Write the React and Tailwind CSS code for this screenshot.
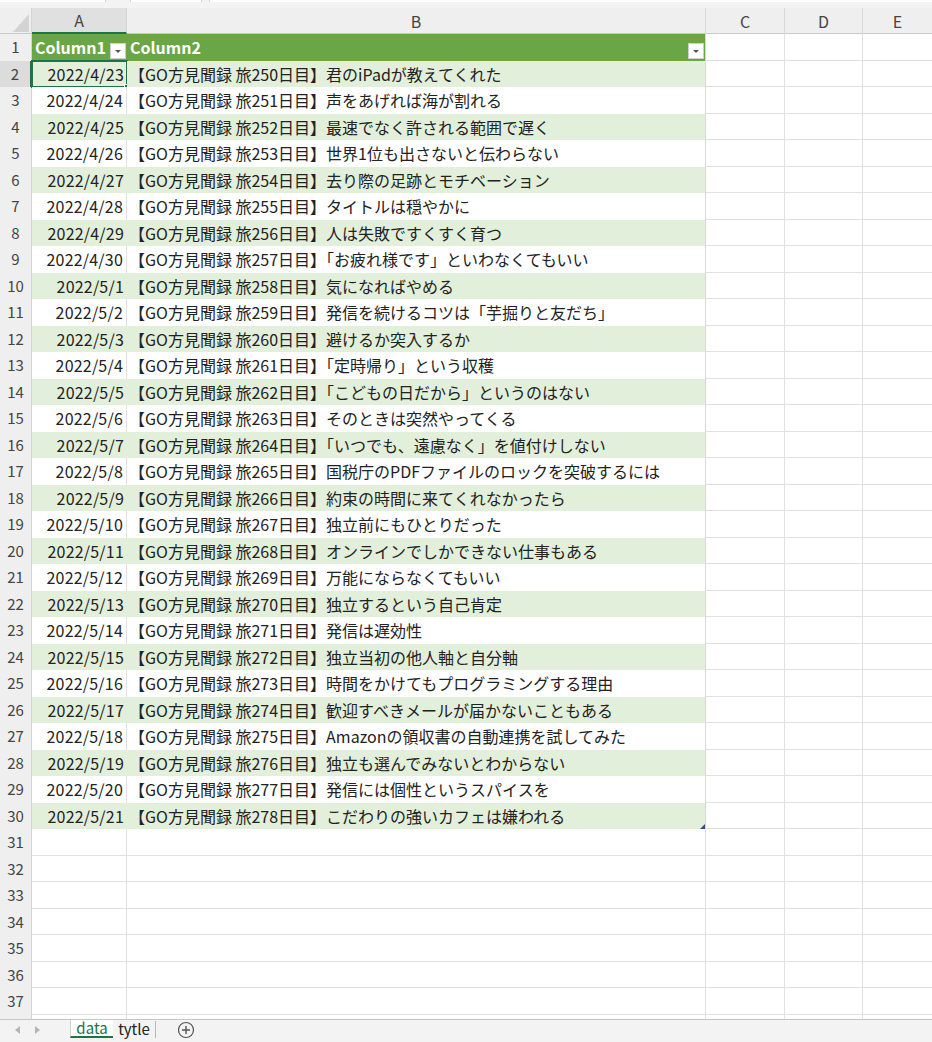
import React from "react";

const rows = [
    ["2022/4/23", "【GO方見聞録 旅250日目】君のiPadが教えてくれた"],
    ["2022/4/24", "【GO方見聞録 旅251日目】声をあげれば海が割れる"],
    ["2022/4/25", "【GO方見聞録 旅252日目】最速でなく許される範囲で遅く"],
    ["2022/4/26", "【GO方見聞録 旅253日目】世界1位も出さないと伝わらない"],
    ["2022/4/27", "【GO方見聞録 旅254日目】去り際の足跡とモチベーション"],
    ["2022/4/28", "【GO方見聞録 旅255日目】タイトルは穏やかに"],
    ["2022/4/29", "【GO方見聞録 旅256日目】人は失敗ですくすく育つ"],
    ["2022/4/30", "【GO方見聞録 旅257日目】「お疲れ様です」といわなくてもいい"],
    ["2022/5/1", "【GO方見聞録 旅258日目】気になればやめる"],
    ["2022/5/2", "【GO方見聞録 旅259日目】発信を続けるコツは「芋掘りと友だち」"],
    ["2022/5/3", "【GO方見聞録 旅260日目】避けるか突入するか"],
    ["2022/5/4", "【GO方見聞録 旅261日目】「定時帰り」という収穫"],
    ["2022/5/5", "【GO方見聞録 旅262日目】「こどもの日だから」というのはない"],
    ["2022/5/6", "【GO方見聞録 旅263日目】そのときは突然やってくる"],
    ["2022/5/7", "【GO方見聞録 旅264日目】「いつでも、遠慮なく」を値付けしない"],
    ["2022/5/8", "【GO方見聞録 旅265日目】国税庁のPDFファイルのロックを突破するには"],
    ["2022/5/9", "【GO方見聞録 旅266日目】約束の時間に来てくれなかったら"],
    ["2022/5/10", "【GO方見聞録 旅267日目】独立前にもひとりだった"],
    ["2022/5/11", "【GO方見聞録 旅268日目】オンラインでしかできない仕事もある"],
    ["2022/5/12", "【GO方見聞録 旅269日目】万能にならなくてもいい"],
    ["2022/5/13", "【GO方見聞録 旅270日目】独立するという自己肯定"],
    ["2022/5/14", "【GO方見聞録 旅271日目】発信は遅効性"],
    ["2022/5/15", "【GO方見聞録 旅272日目】独立当初の他人軸と自分軸"],
    ["2022/5/16", "【GO方見聞録 旅273日目】時間をかけてもプログラミングする理由"],
    ["2022/5/17", "【GO方見聞録 旅274日目】歓迎すべきメールが届かないこともある"],
    ["2022/5/18", "【GO方見聞録 旅275日目】Amazonの領収書の自動連携を試してみた"],
    ["2022/5/19", "【GO方見聞録 旅276日目】独立も選んでみないとわからない"],
    ["2022/5/20", "【GO方見聞録 旅277日目】発信には個性というスパイスを"],
    ["2022/5/21", "【GO方見聞録 旅278日目】こだわりの強いカフェは嫌われる"],
];

const FilterButton = () => (
    <span className="absolute right-[1px] top-[9px] w-[16px] h-[16px] bg-white border border-[#d0d0d0] flex items-center justify-center">
        <svg width="8" height="6" viewBox="0 0 8 6">
            <path d="M1 2 L7 2 L4 5 Z" fill="#555" />
        </svg>
    </span>
);

const RowHead = ({ n, active }) => (
    <div
        className={`flex items-center justify-center text-[15px] text-[#444] border-r ${
            active ? "bg-[#dcdcdc] border-r-2 border-[#217346]" : "bg-[#efefef] border-[#d4d4d4]"
        }`}
    >
        {n}
    </div>
);

const Blank = ({ last }) => (
    <div className={`border-b border-[#e1e1e1] ${last ? "" : "border-r"}`}></div>
);

export default function App() {
    const font = { fontFamily: '"Noto Sans CJK JP", "Noto Sans", sans-serif' };
    const grid = "grid grid-cols-[32px_95px_579px_79px_78px_1fr] h-[26.5px]";

    return (
        <div className="w-[932px] h-[1042px] overflow-hidden flex flex-col bg-white text-[#222]" style={font}>
            {/* bottom edge of the formula bar */}
            <div className="h-[8px] bg-[#f3f3f3] flex flex-col">
                <div className="h-[2px] flex gap-[1px] bg-[#d6d6d6]">
                    <div className="w-[105px] bg-white"></div>
                    <div className="w-[24px] bg-[#f3f3f3]"></div>
                    <div className="w-[70px] bg-white"></div>
                    <div className="w-[7px] bg-[#f3f3f3]"></div>
                    <div className="flex-1 bg-white"></div>
                </div>
            </div>

            {/* column letters */}
            <div className="grid grid-cols-[32px_95px_579px_79px_78px_1fr] h-[26px] bg-[#efefef] border-b border-[#c8c8c8] text-[16px] text-[#444]">
                <div className="relative border-r border-[#d4d4d4]">
                    <svg className="absolute right-[2px] bottom-[2px]" width="16" height="18" viewBox="0 0 16 18">
                        <path d="M16 0 L16 18 L0 18 Z" fill="#d3d3d3" />
                    </svg>
                </div>
                <div className="flex items-center justify-center bg-[#e0e0e0] border-r border-[#d4d4d4] border-b-2 border-b-[#217346]">A</div>
                <div className="flex items-center justify-center border-r border-[#d9d9d9]">B</div>
                <div className="flex items-center justify-center border-r border-[#d9d9d9]">C</div>
                <div className="flex items-center justify-center border-r border-[#d9d9d9]">D</div>
                <div className="flex items-center justify-center">E</div>
            </div>

            <div className="flex-1 overflow-hidden">
                {/* table header */}
                <div className={grid}>
                    <RowHead n={1} />
                    <div className="relative bg-[#6aa645] text-white font-bold text-[16px] flex items-center pl-[3px]">
                        Column1
                        <FilterButton />
                    </div>
                    <div className="relative bg-[#6aa645] text-white font-bold text-[16px] flex items-center pl-[3px] border-r border-[#d8d8d8]">
                        Column2
                        <FilterButton />
                    </div>
                    <Blank />
                    <Blank />
                    <Blank last />
                </div>

                {rows.map(([date, title], i) => {
                    const band = i % 2 === 0;
                    const cell = band ? "bg-[#e2efda]" : "bg-white";
                    return (
                        <div key={i} className={grid}>
                            <RowHead n={i + 2} active={i === 0} />
                            <div className={`relative flex items-center justify-end pr-[3px] text-[16px] tracking-[0.2px] ${cell} ${band ? "" : "border-r border-[#e1e1e1]"}`}>
                                {date}
                                {i === 0 && (
                                    <>
                                        <span className="absolute -left-[1px] -top-[1px] -right-[1px] -bottom-[1px] border-2 border-[#217346]"></span>
                                        <span className="absolute -right-[3px] -bottom-[3px] w-[6px] h-[6px] bg-[#217346] border border-white"></span>
                                    </>
                                )}
                            </div>
                            <div className={`relative flex items-center pl-[2px] text-[16px] whitespace-nowrap border-r border-[#d8d8d8] ${cell}`}>
                                {title}
                                {i === rows.length - 1 && (
                                    <svg className="absolute right-0 bottom-0" width="5" height="5" viewBox="0 0 5 5">
                                        <path d="M5 0 L5 5 L0 5 Z" fill="#2f4f8f" />
                                    </svg>
                                )}
                            </div>
                            <Blank />
                            <Blank />
                            <Blank last />
                        </div>
                    );
                })}

                {[31, 32, 33, 34, 35, 36, 37].map((n) => (
                    <div key={n} className={grid}>
                        <RowHead n={n} />
                        <Blank />
                        <Blank />
                        <Blank />
                        <Blank />
                        <Blank last />
                    </div>
                ))}

                {/* partly visible row below 37 */}
                <div className={grid}>
                    <div className="bg-[#efefef] border-r border-[#d4d4d4]"></div>
                    <Blank />
                    <Blank />
                    <Blank />
                    <Blank />
                    <Blank last />
                </div>
            </div>

            {/* sheet tabs */}
            <div className="h-[23px] shrink-0 bg-[#f3f3f3] border-t border-[#c6c6c6] flex items-start">
                <div className="w-[70px] h-[20px] flex items-center pl-[15px] gap-[13px]">
                    <svg width="6" height="8" viewBox="0 0 6 8">
                        <path d="M5 0 L5 8 L0 4 Z" fill="#b5b5b5" />
                    </svg>
                    <svg width="6" height="8" viewBox="0 0 6 8">
                        <path d="M1 0 L1 8 L6 4 Z" fill="#b5b5b5" />
                    </svg>
                </div>
                <div className="w-[43px] h-[18px] bg-white border-l border-[#d0d0d0] border-b-2 border-b-[#217346] flex items-center justify-center text-[15px] text-[#217346]">
                    data
                </div>
                <div className="w-[43px] h-[17px] mt-[1px] border-r border-[#b8b8b8] flex items-center justify-center text-[15px] text-[#222]">
                    tytle
                </div>
                <div className="ml-[21px] mt-[1px] h-[18px] flex items-center">
                    <svg width="18" height="18" viewBox="0 0 18 18">
                        <circle cx="9" cy="9" r="7.5" fill="none" stroke="#555" strokeWidth="1.2" />
                        <path d="M9 5 L9 13 M5 9 L13 9" stroke="#555" strokeWidth="1.4" />
                    </svg>
                </div>
            </div>
        </div>
    );
}
